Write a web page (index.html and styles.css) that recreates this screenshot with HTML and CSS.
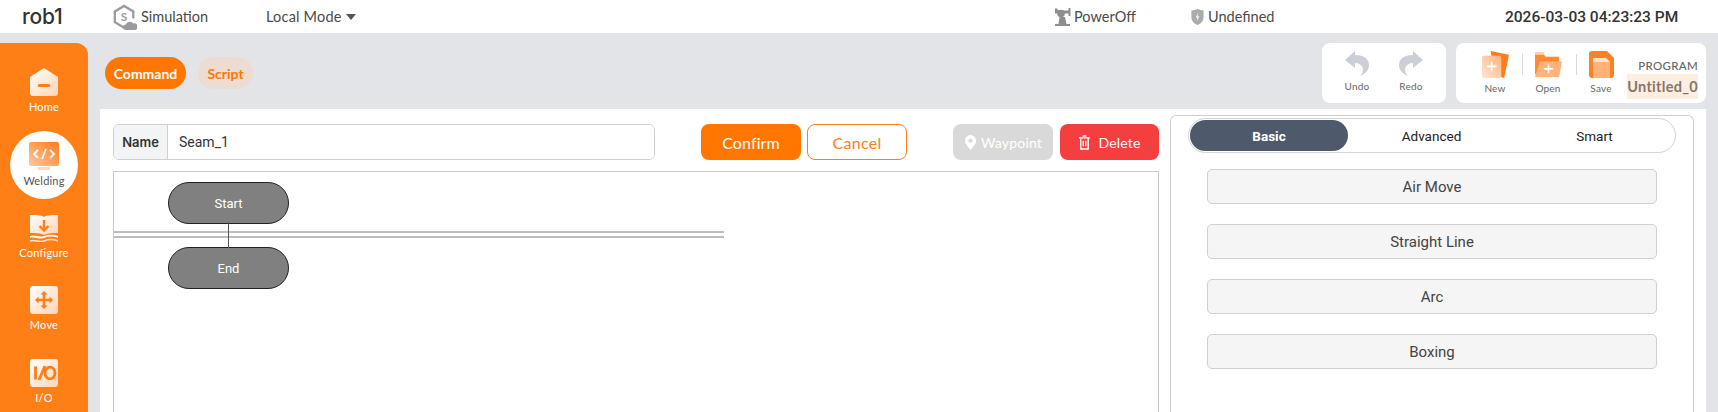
FILE: index.html
```html
<!DOCTYPE html>
<html lang="en">
<head>
<meta charset="utf-8">
<title>rob1</title>
<link rel="stylesheet" href="styles.css">
</head>
<body>
<svg class="defs" width="0" height="0" aria-hidden="true">
  <defs>
    <linearGradient id="wg" x1="0" y1="0" x2="1" y2="1"><stop offset="0" stop-color="#fff"/><stop offset="1" stop-color="#ffd5b5"/></linearGradient>
    <linearGradient id="og" x1="1" y1="0" x2="0" y2="1"><stop offset="0" stop-color="#ff7a1a"/><stop offset="1" stop-color="#ffc9a3"/></linearGradient>
    <linearGradient id="pg" x1="1" y1="0" x2="0" y2="1"><stop offset="0" stop-color="#ffb27a"/><stop offset="1" stop-color="#ffe6d4"/></linearGradient>
  </defs>
</svg>
<header class="topbar">
  <div class="robot">rob1</div>
  <div class="sim">
    <svg class="sim-icon" viewBox="0 0 26 28"><path d="M22 15V7.500L12 1.500 2 7.500v11.500l10 6" fill="none" stroke="#999b9e" stroke-width="2.500"/><text x="12" y="18" class="sim-s">S</text><path d="M14 27.500a3 3 0 0 1 0-6 4.500 4.500 0 0 1 8-1 3.500 3.500 0 0 1 2 7z" fill="#999b9e"/></svg>
    <span>Simulation</span>
  </div>
  <div class="mode"><span>Local Mode</span><i class="caret"></i></div>
  <div class="power">
    <svg class="power-icon" viewBox="0 0 17 19"><path d="M1 17h15v2H1zM5.500 10h5.500l1.500 7H4.500z" fill="#8e8e8e"/><circle cx="7" cy="6.500" r="3.800" fill="#8e8e8e"/><path d="M8 3.500h7v3H8zM14.500 1h2v8h-2zM1 1.500h2.500v5H1zM3 3h3v2.500H3z" fill="#8e8e8e"/></svg>
    <span>PowerOff</span>
  </div>
  <div class="safety">
    <svg class="shield-icon" viewBox="0 0 16 19"><path d="M8 1c2 1 4 1.500 6.500 1.500V10c0 4-3.500 7-6.500 8-3-1-6.500-4-6.500-8V2.500C4 2.500 6 2 8 1z" fill="#a9abae"/><path d="M8.800 5 6 10h2l-.8 4L10 9H8z" fill="#fff"/></svg>
    <span>Undefined</span>
  </div>
  <time class="clock">2026-03-03 04:23:23 PM</time>
</header>

<div class="body">
  <nav class="sidebar">
    <a class="nav-item">
      <svg class="nav-icon" viewBox="0 0 28 28"><path d="M14 0 28 9v16a3 3 0 0 1-3 3H3a3 3 0 0 1-3-3V9z" fill="url(#wg)"/><rect x="8" y="16" width="12" height="3" rx="1" fill="#ff7d1a"/></svg>
      <span>Home</span>
    </a>
    <a class="nav-item active">
      <svg class="nav-icon" viewBox="0 0 30 28"><rect x="0" y="0" width="30" height="24" rx="2" fill="url(#og)"/><rect x="9" y="25" width="12" height="3" fill="#ffd9c2"/><path d="M9 8l-4 4 4 4M21 8l4 4-4 4M17 7l-4 10" fill="none" stroke="#fff" stroke-width="1.800"/></svg>
      <span>Welding</span>
    </a>
    <a class="nav-item">
      <svg class="nav-icon" viewBox="0 0 28 28"><path d="M0 1c5 0 11 0 14 2 3-2 9-2 14-2v18c-5 0-10 0-14 2-4-2-9-2-14-2z" fill="url(#wg)"/><path d="M14 6v10M9.500 12l4.500 4.500 4.500-4.500" fill="none" stroke="#ff7d1a" stroke-width="2.400"/><path d="M0 23c5-2 9 2 14 0s9-2 14 0" fill="none" stroke="#fff" stroke-width="1.800"/><path d="M0 27c5-2 9 2 14 0s9-2 14 0" fill="none" stroke="#ffe6d4" stroke-width="1.500"/></svg>
      <span>Configure</span>
    </a>
    <a class="nav-item">
      <svg class="nav-icon" viewBox="0 0 28 28"><rect width="28" height="28" rx="3" fill="url(#wg)"/><path d="M14 8v12M8 14h12" stroke="#ff7d1a" stroke-width="2.600"/><path d="M14 5l3.500 3.500h-7zM14 23l3.500-3.500h-7zM5 14l3.500-3.500v7zM23 14l-3.500-3.500v7z" fill="#ff7d1a"/></svg>
      <span>Move</span>
    </a>
    <a class="nav-item">
      <svg class="nav-icon" viewBox="0 0 28 28"><rect width="28" height="28" rx="3" fill="url(#wg)"/><path d="M5.500 7.500v13M9 21l6-14" stroke="#ff7d1a" stroke-width="2.800" fill="none"/><ellipse cx="20" cy="14" rx="5" ry="5.800" fill="none" stroke="#ff7d1a" stroke-width="2.800"/></svg>
      <span>I/O</span>
    </a>
  </nav>

  <div class="content">
    <div class="toolbar">
      <div class="mode-tabs">
        <button class="pill pill-on">Command</button>
        <button class="pill pill-off">Script</button>
      </div>
      <div class="cards">
        <div class="card card-history">
          <div class="tool">
            <svg class="hist-icon" viewBox="0 0 24 25"><path d="M10 0 0 9l10 8v-5c5 0 8 3 8 7 0 2-1 4-3 6 6-2 9-7 9-11 0-6-5-10-14-10z" fill="#ccd0d6"/></svg>
            <span>Undo</span>
          </div>
          <div class="tool">
            <svg class="hist-icon" viewBox="0 0 24 25"><path d="M14 0l10 9-10 8v-5c-5 0-8 3-8 7 0 2 1 4 3 6-6-2-9-7-9-11 0-6 5-10 14-10z" fill="#ccd0d6"/></svg>
            <span>Redo</span>
          </div>
        </div>
        <div class="card card-program">
          <div class="tool tool-new">
            <svg class="file-icon" viewBox="0 0 28 28"><path d="M9 0l19 4-5 24-10-3z" fill="#ff7d1a"/><rect x="0" y="5" width="20" height="23" rx="2" fill="url(#pg)"/><path d="M10 11v10M5 16h10" stroke="#fff" stroke-width="1.800"/></svg>
            <span>New</span>
          </div>
          <i class="sep"></i>
          <div class="tool tool-open">
            <svg class="file-icon" viewBox="0 0 28 28"><path d="M0 3h9l2 3h14v18H0z" fill="#ff8a33"/><path d="M0 1h9v3H0z" fill="#ffd0ad"/><path d="M5 11h23l-3 16H0z" fill="#ffb27a"/><path d="M14 14v9M9.500 18.500h9" stroke="#fff" stroke-width="1.800"/></svg>
            <span>Open</span>
          </div>
          <i class="sep"></i>
          <div class="tool tool-save">
            <svg class="file-icon" viewBox="0 0 25 27"><path d="M3 0h15l7 7v17a3 3 0 0 1-3 3H3a3 3 0 0 1-3-3V3a3 3 0 0 1 3-3z" fill="#ff8126"/><path d="M4 7h13l4 4v16H4z" fill="#ffb27a"/><path d="M4 7h13l4 4H4z" fill="#ffe0c9"/></svg>
            <span>Save</span>
          </div>
          <div class="program">
            <span class="program-title">PROGRAM</span>
            <span class="program-name">Untitled_0</span>
          </div>
        </div>
      </div>
    </div>

    <main class="panel">
      <section class="editor">
        <div class="form-row">
          <label class="field">
            <span class="field-label">Name</span>
            <input class="field-input" value="Seam_1">
          </label>
          <button class="btn btn-confirm">Confirm</button>
          <button class="btn btn-cancel">Cancel</button>
          <button class="btn btn-waypoint">
            <svg class="btn-icon" viewBox="0 0 14 16"><path d="M7 0a6 6 0 0 1 6 6c0 4-4 7-6 10-2-3-6-6-6-10a6 6 0 0 1 6-6z" fill="#fff"/><circle cx="7" cy="6" r="2.300" fill="#d9d9d9"/></svg>
            Waypoint
          </button>
          <button class="btn btn-delete">
            <svg class="btn-icon" viewBox="0 0 14 16"><path d="M1 3h12M5 1h4M3 3v12h8V3M5.700 6v6M8.300 6v6" fill="none" stroke="#fff" stroke-width="1.500"/></svg>
            Delete
          </button>
        </div>
        <div class="canvas">
          <i class="link"></i>
          <i class="rule"></i>
          <i class="rule rule-2"></i>
          <div class="node node-start">Start</div>
          <div class="node node-end">End</div>
        </div>
      </section>
      <aside class="library">
        <div class="lib-tabs">
          <button class="lib-tab lib-tab-on">Basic</button>
          <button class="lib-tab lib-tab-mid">Advanced</button>
          <button class="lib-tab lib-tab-end">Smart</button>
        </div>
        <div class="lib-list">
          <button class="lib-item">Air Move</button>
          <button class="lib-item">Straight Line</button>
          <button class="lib-item">Arc</button>
          <button class="lib-item">Boxing</button>
        </div>
      </aside>
    </main>
  </div>
</div>
</body>
</html>
```

FILE: styles.css
```css
* { box-sizing: border-box; }
html, body { margin: 0; height: 412px; overflow: hidden; }
body { width: 1718px; background: #e2e4e7; font-family: "Lato", "Noto Sans", sans-serif; color: #333; }
.defs { position: absolute; }
button { font-family: inherit; padding: 0; cursor: pointer; }

.topbar { height: 33px; background: #fff; display: flex; align-items: center; font-size: 14.500px; color: #4a4a4a; }
.robot { margin-left: 22px; width: 91px; font-family: "Inter", sans-serif; font-size: 21px; font-weight: 500; color: #333; letter-spacing: -0.2px; }
.sim { display: flex; align-items: center; gap: 4px; width: 153px; }
.sim-icon { width: 24px; height: 27px; margin-top: 2px; }
.sim-s { font-size: 13px; fill: #999b9e; text-anchor: middle; font-weight: 700; }
.mode { display: flex; align-items: center; gap: 4px; width: 793px; letter-spacing: 0.2px; }
.caret { width: 0; height: 0; border: 5px solid transparent; border-top: 6px solid #555; border-bottom: 0; }
.power { display: flex; align-items: center; gap: 3px; width: 136px; margin-left: -5px; }
.power-icon { width: 17px; height: 19px; }
.safety { display: flex; align-items: center; gap: 3px; width: 315px; }
.shield-icon { width: 15px; height: 18px; }
.clock { font-family: "Roboto", sans-serif; font-size: 15.500px; font-weight: 500; color: #333; white-space: nowrap; }

.body { display: flex; height: 379px; }
.sidebar { width: 88px; margin-top: 10px; padding-top: 12px; background: #ff7f17; border-radius: 0 12px 0 0; display: flex; flex-direction: column; flex: none; }
.nav-item { height: 72.500px; flex: none; display: flex; flex-direction: column; align-items: center; justify-content: center; gap: 4px; color: #fff; font-size: 11px; line-height: 14px; letter-spacing: 0.2px; }
.nav-icon { width: 28px; height: 28px; flex: none; }
.nav-item.active { width: 68px; height: 68px; margin: 3.500px 10px 1.500px; padding-bottom: 1px; border-radius: 50%; background: #fff; color: #555; }
.nav-item.active .nav-icon { width: 30px; height: 28px; }

.content { flex: 1; min-width: 0; display: flex; flex-direction: column; padding: 10px 12px 0 12px; }
.toolbar { height: 66px; flex: none; display: flex; justify-content: space-between; }
.mode-tabs { display: flex; gap: 12px; padding: 14px 0 0 5px; }
.pill { height: 32px; border: 0; border-radius: 16px; font-weight: 700; font-size: 14px; }
.pill-on { width: 81px; background: #ff7600; color: #fff; }
.pill-off { width: 55px; background: #eddcd1; color: #ff7600; }
.cards { display: flex; gap: 10px; height: 60px; }
.card { background: #fff; border-radius: 8px; display: flex; }
.card-history { width: 124px; padding: 8px 10px 0; justify-content: space-between; }
.card-program { width: 250px; padding: 8px 8px 0 23px; align-items: flex-start; }
.tool { display: flex; flex-direction: column; align-items: center; font-size: 10px; line-height: 12px; color: #666; gap: 4px; letter-spacing: 0.2px; }
.card-history .tool { width: 50px; }
.hist-icon { width: 24px; height: 25px; }
.file-icon { width: 27px; height: 27px; }
.tool-new { width: 32px; }
.tool-open { width: 34px; }
.tool-save { width: 32px; }
.sep { width: 1px; height: 21px; margin: 3px 8px 0 11px; background: #d9d9d9; flex: none; }
.program { display: flex; flex-direction: column; align-items: flex-end; margin-left: auto; margin-top: 8px; }
.program-title { font-size: 11.500px; font-weight: 500; color: #666; letter-spacing: 0.3px; line-height: 14px; }
.program-name { font-size: 14.500px; font-weight: 700; color: #86766a; background: #fdeee2; padding: 2px 0; line-height: 21px; letter-spacing: 0.3px; margin-top: 1px; }

.panel { flex: 1; min-height: 0; background: #fff; display: flex; overflow: hidden; }
.editor { width: 1059px; flex: none; padding: 15px 0 0 13px; display: flex; flex-direction: column; }
.form-row { display: flex; height: 36px; flex: none; }
.field { width: 542px; display: flex; border: 1px solid #cfcfcf; border-radius: 6px; overflow: hidden; }
.field-label { width: 54px; flex: none; display: flex; align-items: center; justify-content: center; background: #f3f4f6; border-right: 1px solid #cfcfcf; font-family: "Inter", sans-serif; font-size: 13px; font-weight: 600; color: #333; }
.field-input { flex: 1; min-width: 0; border: 0; outline: 0; padding: 0 11px; font-family: "Roboto", sans-serif; font-size: 14px; color: #333; background: #fff; }
.btn { width: 100px; height: 36px; border-radius: 8px; border: 0; font-size: 16px; display: flex; align-items: center; justify-content: center; }
.btn-confirm { background: #ff7600; color: #fff; margin-left: 46px; letter-spacing: 0.1px; }
.btn-cancel { background: #fff; color: #ff7d1a; border: 1px solid #ff7d1a; margin-left: 6px; letter-spacing: 0.3px; }
.btn-waypoint { background: #d9d9d9; color: #fff; margin-left: 46px; font-size: 14px; gap: 4px; letter-spacing: 0.2px; }
.btn-delete { background: #f53f3f; color: #fff; margin-left: 7px; font-size: 14px; gap: 7px; width: 99px; letter-spacing: 0.2px; }
.btn-icon { width: 13px; height: 15px; }

.canvas { position: relative; flex: 1; margin-top: 11px; border: 1px solid #c9c9c9; border-bottom: 0; }
.node { position: absolute; left: 54px; width: 121px; height: 42px; border: 1px solid #222; border-radius: 21px; background: #808080; color: #fff; font-family: "Roboto", sans-serif; font-size: 13px; font-weight: 400; display: flex; align-items: center; justify-content: center; }
.node-start { top: 10px; }
.node-end { top: 75px; }
.link { position: absolute; left: 114px; top: 50px; width: 1px; height: 26px; background: #555; z-index: 1; }
.rule { position: absolute; left: 0; top: 59px; width: 610px; height: 2px; background: #bdbdbd; }
.rule-2 { top: 64px; }

.library { flex: none; width: 524px; margin: 6px 0 0 11px; border: 1px solid #cfcfcf; border-bottom: 0; border-radius: 6px 6px 0 0; padding: 2px 17px 0 17px; }
.lib-tabs { display: flex; height: 35px; border: 1px solid #d4d4d4; border-radius: 18px; padding: 1px; }
.lib-tab { border: 0; background: transparent; border-radius: 16px; font-family: "Roboto", sans-serif; font-size: 13.500px; color: #222; }
.lib-tab-on { width: 158px; background: #4e5a6c; color: #fff; font-weight: 700; }
.lib-tab-mid { width: 167px; }
.lib-tab-end { flex: 1; }
.lib-list { display: flex; flex-direction: column; gap: 20px; padding: 16px 19px 0 19px; }
.lib-item { height: 35px; flex: none; border: 1px solid #d0d0d0; border-radius: 5px; background: #f5f5f5; color: #444; font-family: "Roboto", sans-serif; font-size: 15px; }
```
